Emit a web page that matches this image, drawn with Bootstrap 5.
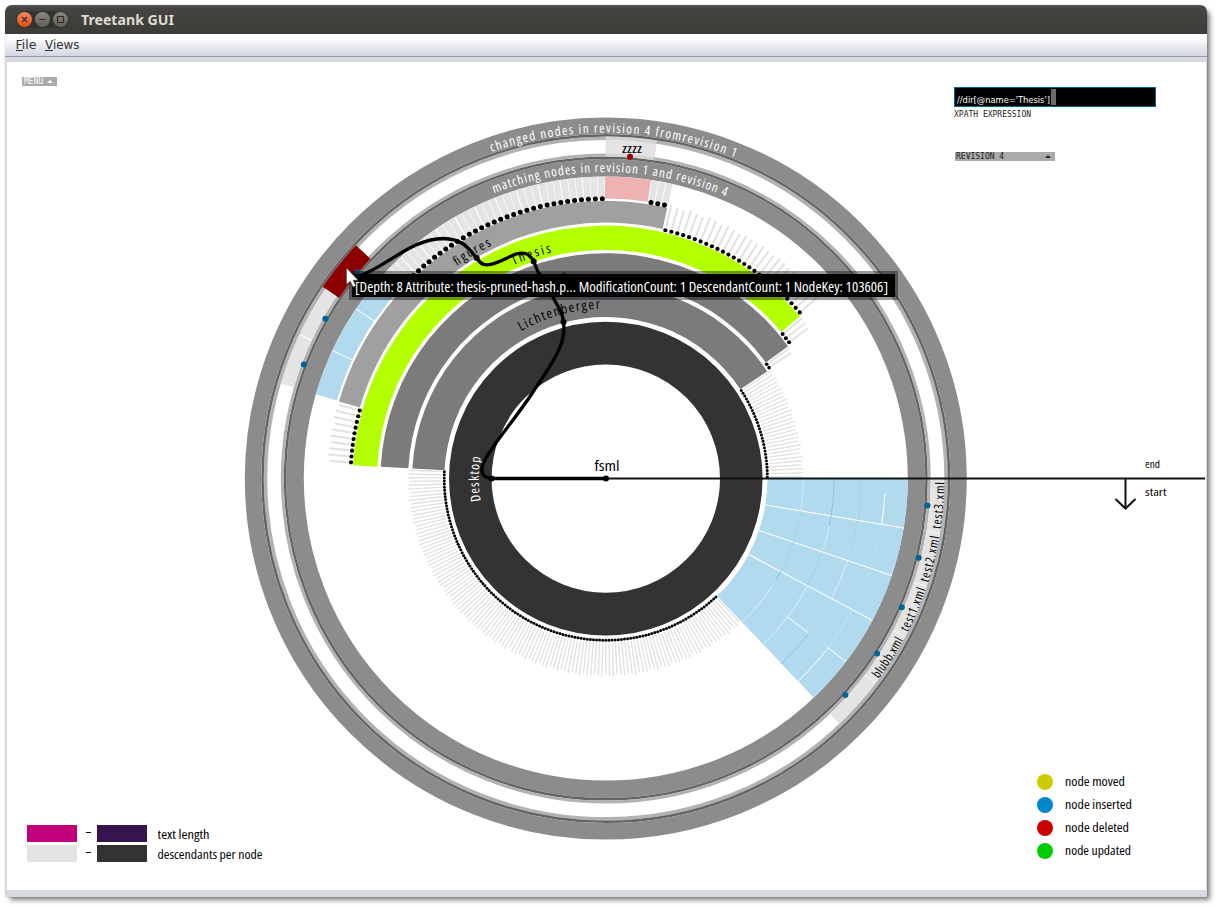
<!DOCTYPE html>
<html lang="en">
<head>
<meta charset="utf-8">
<title>Treetank GUI</title>
<link rel="stylesheet" href="https://cdn.jsdelivr.net/npm/bootstrap@5.3.0/dist/css/bootstrap.min.css">
<style>
body{width:1216px;height:907px;overflow:hidden;padding:5px 9px 10px 5px;background:#fff}
.app-window{width:1202px;height:892px;border-radius:7px 7px 0 0;box-shadow:4px 4px 5px -1px rgba(0,0,0,.5),0 0 1px rgba(0,0,0,.5)}
.title-strip{height:29px;padding-left:11px;background:linear-gradient(#5a5852,#464541 8%,#3c3b37);border-radius:7px 7px 0 0}
.menu-strip{height:23px;padding-left:11px;background:linear-gradient(#fff 15%,#d2d6e2);border-bottom:1px solid #9498a8}
.work-area{height:840px;background:#fff;border:solid #d6d9e0;border-width:5px 1px 7px 2px}
#sunburst{left:0;top:0;width:1216px;height:907px;pointer-events:none}
svg{overflow:visible}
svg text{font-family:"Open Sans","Roboto",sans-serif;font-stretch:75%}
.pix{font:8px/9px "DejaVu Sans Mono",monospace;white-space:pre}
.menu-chip{left:22px;top:77px;width:35px;height:9px;background:#aaa;color:#fff;padding-left:2px}
.rev-chip{left:955px;top:152px;width:100px;height:9px;background:#aaa;color:#222;padding-left:1px;padding-right:4px}
.xp-field{left:954px;top:87px;width:202px;height:20px;background:#000;border:1px solid #006a85;color:#fff}
.xp-caret{left:96px;top:1px;width:5px;height:16px;background:#6b6b6b}
.xp-label{left:954px;top:110px;color:#222}
.tri{width:0;height:0;border:3px solid transparent;border-top:0;border-bottom:3px solid currentColor}
.range-key{left:27px;top:825px;row-gap:3px}
.swatch{width:50px;height:17px}
.dash{width:20px;padding-left:2px;text-align:center;color:#000;font:12px/17px "Roboto",sans-serif}
.dash i{display:inline-block;width:5px;height:1px;background:#000;vertical-align:4px}
.state-key{left:1037px;top:774px;row-gap:7px}
.dot{width:16px;height:16px;border-radius:50%}
</style>
</head>
<body>
<div class="app-window d-flex flex-column">
  <header class="title-strip d-flex align-items-center">
    <svg width="170" height="29" viewBox="16 5 170 29">
      <defs><linearGradient id="cl" x2="0" y2="1"><stop stop-color="#f58a62"/><stop offset="1" stop-color="#df4d14"/></linearGradient>
      <linearGradient id="gr" x2="0" y2="1"><stop stop-color="#8a8880"/><stop offset="1" stop-color="#605f58"/></linearGradient></defs>
      <rect x="16" y="11" width="53" height="17" rx="8.500" fill="#34332f"/>
      <circle cx="24.500" cy="19.500" r="7.500" fill="url(#cl)"/><circle cx="42.500" cy="19.500" r="7.500" fill="url(#gr)"/><circle cx="60.500" cy="19.500" r="7.500" fill="url(#gr)"/>
      <path d="M22 17l5 5m0-5l-5 5M39 19.500h7M57.500 16.500h6v6h-6z" fill="none" stroke="#3a2c22" stroke-width="1.200"/>
      <text x="81" y="24.500" textLength="93" lengthAdjust="spacingAndGlyphs" style="font:bold 14px 'Noto Sans',sans-serif" fill="#dfdbd2">Treetank GUI</text>
    </svg>
  </header>
  <nav class="menu-strip d-flex">
    <svg width="80" height="21" viewBox="16 34 80 21"><g style="font-size:12.500px" fill="#333"><text x="15.500" y="49" textLength="21" lengthAdjust="spacingAndGlyphs" style="font-family:'DejaVu Sans',sans-serif;font-stretch:normal">File</text><text x="45" y="49" textLength="34.500" lengthAdjust="spacingAndGlyphs" style="font-family:'DejaVu Sans',sans-serif;font-stretch:normal">Views</text></g><path d="M16 50.500h7M45 50.500h8" stroke="#333"/></svg>
  </nav>
  <main class="work-area"></main>
</div>

<div class="position-absolute pix menu-chip d-flex align-items-center">MENU<i class="tri ms-1"></i></div>
<div class="position-absolute xp-field"><span class="position-absolute xp-caret"></span>
  <svg class="d-block" width="190" height="18"><text x="2" y="15" textLength="93" lengthAdjust="spacingAndGlyphs" fill="#fff" style="font:9.500px 'DejaVu Sans',sans-serif">//dir[@name='Thesis']</text></svg></div>
<div class="position-absolute pix xp-label">XPATH EXPRESSION</div>
<div class="position-absolute pix rev-chip d-flex align-items-center justify-content-between"><span>REVISION 4</span><i class="tri"></i></div>

<div class="position-absolute range-key d-flex flex-column">
  <div class="d-flex"><span class="swatch" style="background:#c2007b"></span><span class="dash"><i></i></span><span class="swatch" style="background:#371650"></span>
  <svg class="ms-2" width="120" height="17"><text x="2.500" y="14" font-size="13" textLength="52" lengthAdjust="spacingAndGlyphs">text length</text></svg></div>
  <div class="d-flex"><span class="swatch" style="background:#e4e4e4"></span><span class="dash"><i></i></span><span class="swatch" style="background:#333"></span>
  <svg class="ms-2" width="120" height="17"><text x="2.500" y="14" font-size="13" textLength="105" lengthAdjust="spacingAndGlyphs">descendants per node</text></svg></div>
</div>

<div class="position-absolute state-key d-flex flex-column">
  <div class="d-flex"><span class="dot" style="background:#cc0"></span><svg class="ms-2" width="90" height="16"><text x="4" y="12" font-size="13" textLength="60" lengthAdjust="spacingAndGlyphs">node moved</text></svg></div>
  <div class="d-flex"><span class="dot" style="background:#0088cc"></span><svg class="ms-2" width="90" height="16"><text x="4" y="12" font-size="13" textLength="67" lengthAdjust="spacingAndGlyphs">node inserted</text></svg></div>
  <div class="d-flex"><span class="dot" style="background:#c00"></span><svg class="ms-2" width="90" height="16"><text x="4" y="12" font-size="13" textLength="64" lengthAdjust="spacingAndGlyphs">node deleted</text></svg></div>
  <div class="d-flex"><span class="dot" style="background:#0c0"></span><svg class="ms-2" width="90" height="16"><text x="4" y="12" font-size="13" textLength="66" lengthAdjust="spacingAndGlyphs">node updated</text></svg></div>
</div>

<svg id="sunburst" class="position-absolute" viewBox="0 0 1216 907"></svg>

<script src="https://cdn.jsdelivr.net/npm/bootstrap@5.3.0/dist/js/bootstrap.bundle.min.js"></script>
<script>
const CX = 605.8, CY = 478.6;
let out = '', pathId = 0;
// angles are degrees counter-clockwise from east
const pt = (r, a) => [CX + r * Math.cos(a * Math.PI / 180), CY - r * Math.sin(a * Math.PI / 180)].map(v => v.toFixed(2)).join(' ');
function sector(r0, r1, a0, a1, fill) {
  const big = a1 - a0 > 180 ? 1 : 0;
  out += `<path fill="${fill}" d="M${pt(r1, a0)}A${r1} ${r1} 0 ${big} 0 ${pt(r1, a1)}L${pt(r0, a1)}A${r0} ${r0} 0 ${big} 1 ${pt(r0, a0)}Z"/>`;
}
function ring(r0, r1, color) {
  out += `<circle cx="${CX}" cy="${CY}" r="${(r0 + r1) / 2}" fill="none" stroke="${color}" stroke-width="${r1 - r0}"/>`;
}
function ray(r0, r1, a, color, w) {
  out += `<path d="M${pt(r0, a)}L${pt(r1, a)}" stroke="${color}" stroke-width="${w}"/>`;
}
function arcLine(r, a0, a1, color, w) {
  out += `<path d="M${pt(r, a0)}A${r} ${r} 0 0 0 ${pt(r, a1)}" fill="none" stroke="${color}" stroke-width="${w}"/>`;
}
function dotAt(r, a, size, color) {
  const p = pt(r, a).split(' ');
  out += `<circle cx="${p[0]}" cy="${p[1]}" r="${size}" fill="${color}"/>`;
}
// leaf nodes: a dot on the ring and a thin ray outwards
function leaves(a0, a1, n, r, rEnd, size, w, rays = true) {
  const step = (a1 - a0) / n;
  for (let i = 0; i < n; i++) {
    const a = a0 + step * (i + .5);
    if (rays) ray(r + 3, rEnd + (i * 7 % 3) - 1, a, '#e2e2e2', w);
    dotAt(r, a, size, '#000');
  }
}
function curved(txt, r, a0, a1, color, size) {
  const id = 'tp' + (pathId++), sweep = a0 > a1 ? 1 : 0, d = a1 > a0 ? 4 : -4;
  const len = Math.abs(a1 - a0) * Math.PI / 180 * r;
  out += `<path id="${id}" fill="none" d="M${pt(r, a0)}A${r} ${r} 0 0 ${sweep} ${pt(r, a1 + d)}"/>` +
    `<text font-size="${size}" fill="${color}" textLength="${len.toFixed(1)}"><textPath href="#${id}" textLength="${len.toFixed(1)}">${txt}</textPath></text>`;
}

// comparison rings
ring(302, 319.5, '#8c8c8c'); ring(319.5, 322, '#646464');
ring(322, 325, '#b2b2b2'); ring(338.5, 342, '#b2b2b2');
ring(342, 344.5, '#646464'); ring(344.5, 361, '#8c8c8c');

// changed nodes
sector(322, 342, 81.4, 90, '#d4d4d4'); sector(325, 338.5, 81.4, 90, '#e4e4e4');
sector(322, 342, 136.95, 145.9, '#8c0000');
for (const [a, b] of [[146.1, 154.7], [154.9, 163.7]]) sector(325, 338.5, a, b, '#e4e4e4');
for (let i = 0; i < 5; i++) sector(325, 338.5, -9.3 * (i + 1) + .1, -9.3 * i, '#e4e4e4');

// root and directory rings
ring(114.2, 156.8, '#333');
sector(161.5, 193.7, 33.6, 177, '#7b7b7b');
sector(197.7, 225.3, 36, 177, '#7b7b7b');
sector(228.7, 253, 39.9, 177, '#b3ff00');
sector(256, 277.7, 77.2, 163.9, '#a0a0a0');
sector(280, 302, 81.4, 90.2, '#efb2b2');
for (const [a, b] of [[137, 145.7], [145.9, 154.8], [155, 163.8]]) sector(280, 302, a, b, '#b2daee');
for (let i = 0; i < 33; i++) {
  const a = 90.2 + i * 1.418;
  sector(280, 302, a + (i % 3 ? .06 : .16), a + 1.36, '#e4e4e4');
}
for (let i = 0; i < 3; i++) sector(280, 302, 77.2 + i * 1.4, 78.45 + i * 1.4, '#e4e4e4');
leaves(90, 136.99, 33, 279.8, 302, 2.5, 0, false);
leaves(77.2, 81.4, 3, 279.8, 302, 2.5, 0, false);
leaves(39.9, 77.2, 27, 255.4, 280, 2.1, 2.1);
leaves(163.9, 177, 10, 255.3, 278, 2.1, 2.1);
leaves(36, 39.9, 3, 228.4, 253, 2, 1.9);
leaves(33.6, 36, 2, 197.4, 225, 1.8, 1.8);
leaves(0, 33.6, 29, 161.6, 197, 1.5, 1.4);
leaves(177, 313.5, 124, 161.6, 197, 1.5, 1.4);

// inserted subtree
sector(161.7, 302, -46.5, 0, '#b2daee');
for (const a of [-9.4, -18.7, -28]) ray(161.7, 302, a, '#fff', 1.1);
ray(180, 228, -37.3, '#c9e5f3', .5); ray(228, 255, -37.3, '#fff', 1); ray(255, 279, -37.3, '#c9e5f3', .6); ray(279, 302, -37.3, '#fff', 1);
arcLine(197.5, -9.4, 0, '#d9edf7', .8); arcLine(198, -28, -9.4, '#9dcde9', .7); arcLine(198, -31, -28, '#7fbde2', 1); arcLine(198, -46.5, -33, '#e6f3fa', .8);
arcLine(228.5, -12, 0, '#86c2e6', .9); arcLine(228.5, -18.7, -12, '#d9edf7', .8); arcLine(228.5, -28, -18.7, '#9dcde9', .7); arcLine(228.5, -46.5, -28, '#e6f3fa', .8);
arcLine(255.5, -16, 0, '#a5d1eb', .8); arcLine(255.5, -28, -18.7, '#e6f3fa', .9); arcLine(255.5, -46.5, -37.3, '#86c2e6', 1);
arcLine(279.5, -9.4, -3, '#fff', 1); arcLine(279.5, -24, -9.4, '#bfe0f1', .7); arcLine(279.5, -37.3, -28, '#cde7f4', .8); arcLine(279.5, -46.5, -37.3, '#fff', 1);

// change markers
for (const a of [-4.8, -14.2, -23.5, -32.8, -42.1, 140.3, 150.3, 159.3]) dotAt(322.8, a, 3, '#006496');
dotAt(322.8, 85.7, 3, '#960000');

// reading direction
out += `<path d="M606 478.500H1205" stroke="#111" stroke-width="2"/><path d="M1125.500 478V508M1115.500 499L1125.500 508.500L1135.500 499" fill="none" stroke="#111" stroke-width="2"/>`;

// labels
curved('changed nodes in revision 4 fromrevision 1', 346, 109.3, 68.1, '#fff', 13);
curved('matching nodes in revision 1 and revision 4', 306.5, 111.4, 67, '#fff', 13);
curved('figures', 259.5, 125, 116.1, '#000', 13);
curved('Thesis', 232.5, 113.3, 103.5, '#000', 13);
curved('Master', 203, 111, 101, '#000', 13);
curved('Lichtenberger', 170, 119.9, 92, '#000', 13.5);
curved('Desktop', 127, 190.2, 170.3, '#fff', 13.5);
curved('test3.xml', 338.5, -8.6, -.6, '#000', 12.5);
curved('test2.xml', 338.5, -17.9, -9.9, '#000', 12.5);
curved('test1.xml', 338.5, -27, -19.1, '#000', 12.5);
curved('blubb.xml', 338.5, -36.3, -28.5, '#000', 12.5);
const flat = (x, y, w, s, size, c = '#000') => out += `<text x="${x}" y="${y}" font-size="${size}" fill="${c}" textLength="${w}" lengthAdjust="spacingAndGlyphs">${s}</text>`;
flat(622, 152.5, 20, 'zzzz', 12);
flat(594.5, 470.5, 25, 'fsml', 14);
flat(1145, 468, 15, 'end', 11.5);
flat(1145, 496, 21.5, 'start', 11.5);

// path from the root to the hovered node
out += `<path fill="none" stroke="#000" stroke-width="3.300" stroke-linecap="round" stroke-linejoin="round" d="M606 478.500H491.500C483 478 480 472 483 464C489 448 512 424 533 392C550 366 567 345 563.500 322C562 308 557 307 553 297C547 283 542 276 538 272L533.500 261C529 253 524 252 516 254C503 259 486 271 479 261L476.700 258C468 248 463 239 443.300 238.500C412 239 388 265 362 275L350 279"/>`;
for (const [x, y] of [[606, 478.5], [491.5, 478.5], [563.5, 322], [533.7, 261.5], [476.7, 258]]) out += `<circle cx="${x}" cy="${y}" r="3"/>`;

// tooltip and pointer
out += `<rect x="349" y="271" width="549" height="29" fill="#000" opacity=".4"/><rect x="352" y="274" width="543" height="23"/>`;
flat(355, 291.5, 533, '[Depth: 8 Attribute: thesis-pruned-hash.p... ModificationCount: 1 DescendantCount: 1 NodeKey: 103606]', 13.5, '#fff');
out += `<path d="M346.500 268v16.500l3.800-3.300 2.800 5.800 2.700-1.200-2.700-5.600h5z" fill="#fff" stroke="#555" stroke-width=".7"/>`;
document.getElementById('sunburst').innerHTML = out;
</script>
</body>
</html>
